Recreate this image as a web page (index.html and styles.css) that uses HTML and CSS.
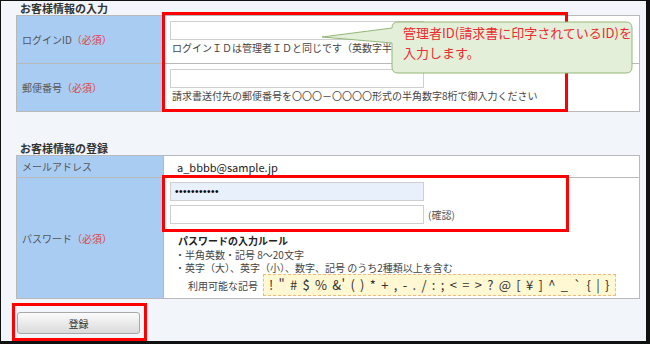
FILE: index.html
```html
<!DOCTYPE html>
<html lang="ja">
<head>
    <meta charset="UTF-8">
    <title>お客様情報の登録</title>
    <link rel="stylesheet" href="styles.css">
</head>
<body>
    <div class="frame">
        <!-- お客様情報の入力 -->
        <h2 class="section-title">お客様情報の入力</h2>
        <div class="form-table">
            <div class="label tall">ログインID<span class="req">（必須）</span></div>
            <div class="value tall">
                <input class="field" type="text">
                <p class="hint">ログインＩＤは管理者ＩＤと同じです（英数字半角）</p>
            </div>
            <div class="label tall">郵便番号<span class="req">（必須）</span></div>
            <div class="value tall">
                <input class="field" type="text">
                <p class="hint">請求書送付先の郵便番号を〇〇〇－〇〇〇〇形式の半角数字8桁で御入力ください</p>
            </div>
        </div>

        <!-- お客様情報の登録 -->
        <h2 class="section-title second">お客様情報の登録</h2>
        <div class="form-table">
            <div class="label short">メールアドレス</div>
            <div class="value short mail">a_bbbb@sample.jp</div>
            <div class="label pw">パスワード<span class="req">（必須）</span></div>
            <div class="value pw">
                <input class="field filled" type="password" value="abcdefghijk">
                <div class="confirm-row">
                    <input class="field" type="password">
                    <span class="confirm">(確認)</span>
                </div>
                <div class="rules">
                    <p class="rules-title">パスワードの入力ルール</p>
                    <p class="rule">・半角英数・記号 8～20文字</p>
                    <p class="rule">・英字（大）、英字（小）、数字、記号 のうち2種類以上を含む</p>
                    <div class="symbols">
                        <span class="symbols-label">利用可能な記号</span>
                        <span class="symbols-box">! " # $ % &amp;' ( ) * + , - . / : ; &lt; = &gt; ? @ [ ¥ ] ^ _ ` { | }</span>
                    </div>
                </div>
            </div>
        </div>

        <div class="submit-wrap">
            <button class="submit" type="button">登録</button>
        </div>

        <!-- 注釈 -->
        <div class="mark mark-login"></div>
        <div class="mark mark-password"></div>
        <div class="balloon">
            <svg width="314" height="56" viewBox="0 0 314 56">
                <path d="M78,2 H306 Q312,2 312,8 V47 Q312,53 306,53 H78 Q72,53 72,47 V23 L2,17 L72,8 Q72,2 78,2 Z" fill="#e3efd8" stroke="#93b877" stroke-width="1"/>
            </svg>
            <p class="balloon-text">管理者ID(請求書に印字されているID)を<br>入力します。</p>
        </div>
    </div>
</body>
</html>
```

FILE: styles.css
```css
/* Reset */
body {
    margin: 0;
    padding: 0;
    font-family: "Noto Sans CJK JP", "Noto Sans", sans-serif;
    color: #444;
}

p {
    margin: 0;
}

/* Frame */
.frame {
    position: relative;
    width: 650px;
    height: 344px;
    box-sizing: border-box;
    border-style: solid;
    border-color: #111;
    border-width: 1px 4px 3px 1px;
    background: #f2f6fa;
    padding-left: 15px;
    overflow: hidden;
}

.section-title {
    margin: 0;
    padding-left: 4px;
    height: 14px;
    font-size: 11px;
    line-height: 14px;
    font-weight: bold;
    color: #333;
}

.section-title.second {
    margin-top: 29px;
}

/* Form tables */
.form-table {
    display: grid;
    grid-template-columns: 146px 475px;
    gap: 1px;
    width: 624px;
    box-sizing: border-box;
    border: 1px solid #b9b9b9;
    background: #b9b9b9;
}

.label {
    display: flex;
    align-items: center;
    padding-left: 5px;
    background: #a9ccf3;
    font-size: 10px;
    color: #555;
}

.req {
    color: #e0414b;
}

.value {
    background: #fff;
    padding-left: 6px;
    font-size: 10px;
}

.tall {
    height: 47px;
}

.value.tall {
    padding-top: 5px;
    box-sizing: border-box;
}

.short {
    height: 21px;
}

.pw {
    height: 120px;
}

.value.pw {
    padding-top: 4px;
    box-sizing: border-box;
}

.field {
    display: block;
    width: 254px;
    height: 19px;
    box-sizing: border-box;
    margin: 0;
    border: 1px solid #cfcfcf;
    background: #fff;
    font-size: 9px;
    padding: 0 4px;
}

.field.filled {
    background: #e8f0fc;
    font-size: 10px;
    letter-spacing: 0.5px;
}

.hint {
    margin-top: 2px;
    padding-left: 2px;
    line-height: 12px;
    color: #444;
}

.mail {
    display: flex;
    align-items: center;
    padding-left: 13px;
    font-size: 11px;
    color: #222;
}

.confirm-row {
    display: flex;
    align-items: center;
    gap: 4px;
    margin-top: 4px;
}

.confirm-row .field {
    display: inline-block;
}

.confirm {
    color: #555;
}

/* Password rules */
.rules {
    margin-top: 10px;
    padding-left: 5px;
}

.rules-title {
    padding-left: 3px;
    margin-bottom: 1px;
    font-weight: bold;
    line-height: 13px;
    color: #222;
}

.rule {
    line-height: 13px;
    color: #444;
}

.symbols {
    display: flex;
    align-items: center;
    gap: 5px;
    margin-top: 0;
    padding-left: 13px;
}

.symbols-box {
    display: inline-block;
    height: 22px;
    box-sizing: border-box;
    padding: 0 5px;
    background: #fff8d2;
    border: 1px dashed #f3b97c;
    font-size: 13px;
    line-height: 20px;
    letter-spacing: 0.3px;
    word-spacing: 1.8px;
    color: #333;
}

/* Submit */
.submit-wrap {
    display: inline-block;
    margin: 4px 0 0 -4px;
    padding: 6px 4px 4px 2px;
    border: 3px solid #f00;
}

.submit {
    display: block;
    width: 123px;
    height: 22px;
    border: 1px solid #a8a8a8;
    border-radius: 3px;
    background: linear-gradient(#fbfbfb, #dadada);
    font-family: "Noto Sans CJK JP", sans-serif;
    font-size: 10px;
    color: #333;
}

/* Annotations */
.mark {
    position: absolute;
    border: 3px solid #f00;
    box-sizing: border-box;
}

.mark-login {
    left: 161px;
    top: 11px;
    width: 406px;
    height: 100px;
}

.mark-password {
    left: 161px;
    top: 174px;
    width: 407px;
    height: 57px;
}

.balloon {
    position: absolute;
    left: 319px;
    top: 19px;
    width: 314px;
    height: 56px;
}

.balloon svg {
    display: block;
}

.balloon-text {
    position: absolute;
    left: 83px;
    top: 3px;
    font-size: 13px;
    line-height: 20px;
    color: #ec2a2f;
    white-space: nowrap;
}
```
